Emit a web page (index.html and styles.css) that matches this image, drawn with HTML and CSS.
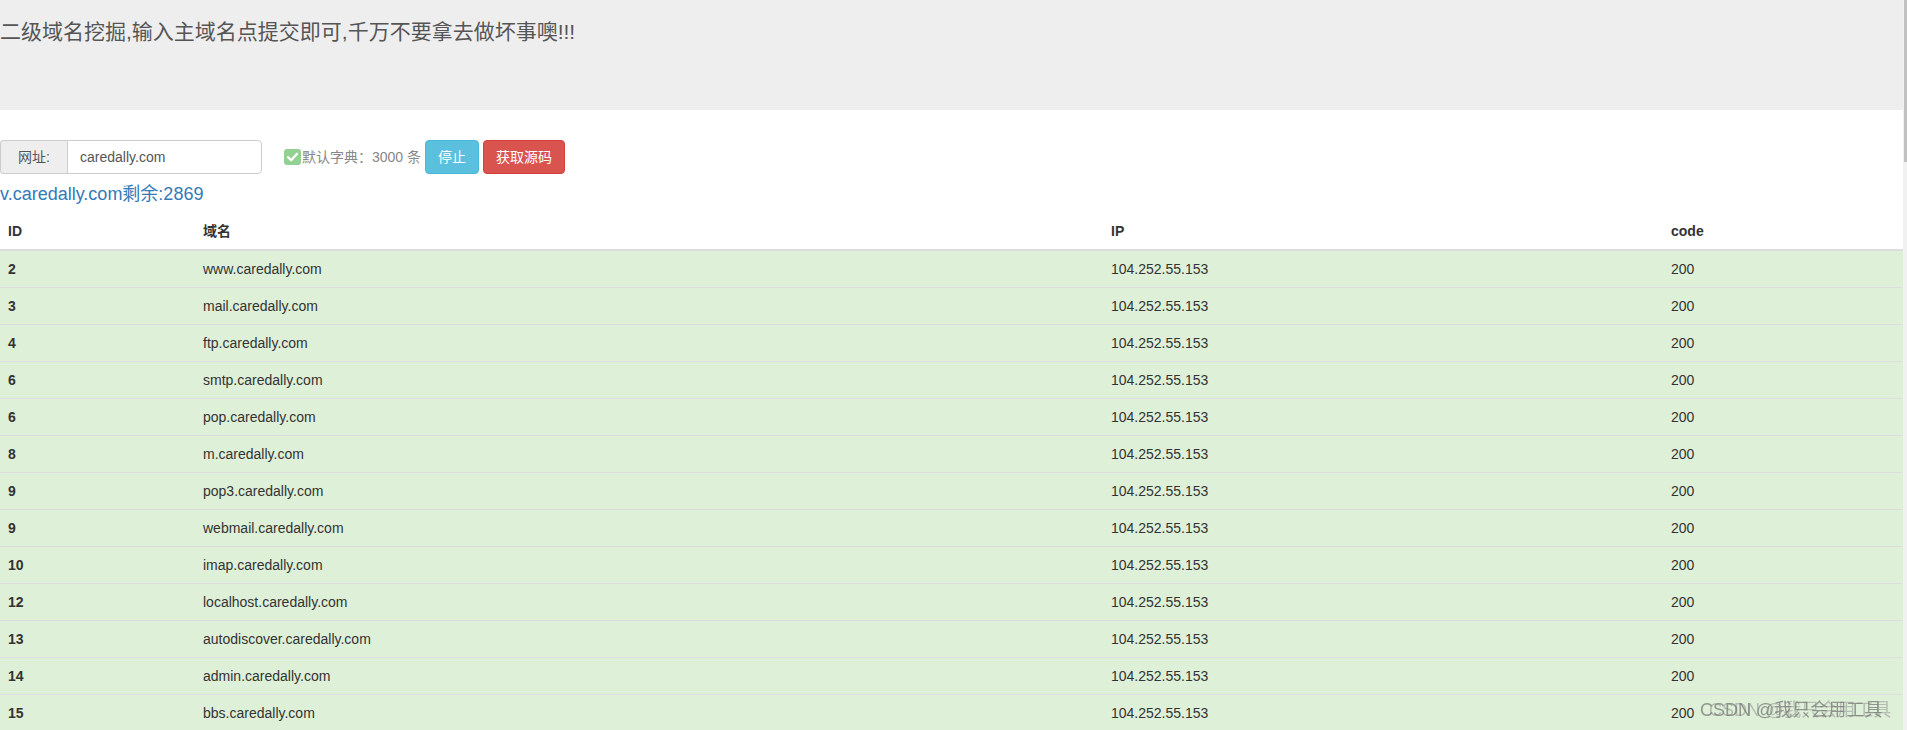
FILE: index.html
```html
<!DOCTYPE html>
<html lang="zh-CN">
<head>
    <meta charset="UTF-8">
    <meta name="viewport" content="width=device-width, initial-scale=1.0">
    <title>二级域名挖掘</title>
    <link rel="stylesheet" href="styles.css">
</head>
<body>
    <div class="page">
        <div class="jumbotron">
            <h3>二级域名挖掘,输入主域名点提交即可,千万不要拿去做坏事噢!!!</h3>
        </div>

        <div class="form-row">
            <div class="input-group">
                <span class="addon">网址:</span>
                <input type="text" class="domain-input" value="caredally.com">
            </div>
            <label class="dict">
                <svg class="check" width="17" height="16" viewBox="0 0 17 16">
                    <rect x="0" y="0" width="17" height="16" rx="3" fill="#92d192"/>
                    <path d="M4 8.2 L7.2 11.2 L13 4.8" fill="none" stroke="#fff" stroke-width="2.4" stroke-linecap="round" stroke-linejoin="round"/>
                </svg>
                默认字典：3000 条
            </label>
            <button class="btn btn-info">停止</button>
            <button class="btn btn-danger">获取源码</button>
        </div>

        <div class="progress-text">v.caredally.com剩余:2869</div>

        <table class="table">
            <thead>
                <tr>
                    <th class="col-id">ID</th>
                    <th class="col-name">域名</th>
                    <th class="col-ip">IP</th>
                    <th class="col-code">code</th>
                </tr>
            </thead>
            <tbody id="rows"></tbody>
        </table>
    </div>

    <div class="watermark">CSDN @我只会用工具</div>

    <div class="scrollbar"><div class="thumb"></div></div>

    <script>
        const results = [
            [2, 'www.caredally.com'],
            [3, 'mail.caredally.com'],
            [4, 'ftp.caredally.com'],
            [6, 'smtp.caredally.com'],
            [6, 'pop.caredally.com'],
            [8, 'm.caredally.com'],
            [9, 'pop3.caredally.com'],
            [9, 'webmail.caredally.com'],
            [10, 'imap.caredally.com'],
            [12, 'localhost.caredally.com'],
            [13, 'autodiscover.caredally.com'],
            [14, 'admin.caredally.com'],
            [15, 'bbs.caredally.com']
        ];

        const tbody = document.getElementById('rows');
        results.forEach(function(r) {
            const tr = document.createElement('tr');
            tr.className = 'success';
            tr.innerHTML = `<th>${r[0]}</th><td>${r[1]}</td><td>104.252.55.153</td><td>200</td>`;
            tbody.appendChild(tr);
        });
    </script>
</body>
</html>
```

FILE: styles.css
```css
html, body {
    margin: 0;
    padding: 0;
    overflow: hidden;
}
body {
    font-family: "Liberation Sans", Arial, "Noto Sans CJK SC", sans-serif;
    font-size: 14px;
    line-height: 20px;
    color: #333;
    background-color: #fff;
}
.page {
    width: 1903px;
}
.jumbotron {
    background-color: #eee;
    height: 110px;
    padding-top: 20px;
    box-sizing: border-box;
}
.jumbotron h3 {
    margin: 0;
    font-size: 21px;
    font-weight: normal;
    line-height: 24px;
    color: #555;
}
.form-row {
    display: flex;
    align-items: center;
    margin-top: 30px;
    height: 34px;
}
.input-group {
    display: flex;
    width: 262px;
    height: 34px;
}
.addon {
    width: 67px;
    box-sizing: border-box;
    padding: 6px 12px;
    background-color: #eee;
    border: 1px solid #ccc;
    border-right: none;
    border-radius: 4px 0 0 4px;
    color: #555;
    text-align: center;
}
.domain-input {
    width: 195px;
    box-sizing: border-box;
    padding: 6px 12px;
    border: 1px solid #ccc;
    border-radius: 0 4px 4px 0;
    font-family: inherit;
    font-size: 14px;
    color: #555;
    outline: none;
}
.dict {
    display: flex;
    align-items: center;
    margin-left: 22px;
    color: #888;
}
.check {
    margin-right: 1px;
}
.btn {
    height: 34px;
    padding: 6px 12px;
    margin-left: 4px;
    border: 1px solid transparent;
    border-radius: 4px;
    font-family: inherit;
    font-size: 14px;
    line-height: 20px;
    color: #fff;
    cursor: pointer;
}
.btn-info {
    background-color: #5bc0de;
    border-color: #46b8da;
}
.btn-danger {
    background-color: #d9534f;
    border-color: #d43f3a;
}
.progress-text {
    margin: 9px 0 8px;
    font-size: 18px;
    line-height: 22px;
    color: #337ab7;
}
.table {
    width: 1903px;
    border-collapse: collapse;
    border-spacing: 0;
    table-layout: fixed;
}
.table th,
.table td {
    padding: 8px;
    text-align: left;
    line-height: 20px;
    font-size: 14px;
}
.table thead th {
    border-bottom: 2px solid #ddd;
    font-weight: bold;
}
.table tbody th {
    font-weight: bold;
}
.table tbody tr {
    border-top: 1px solid #ddd;
}
.table tbody tr:first-child {
    border-top: none;
}
.table tr.success th,
.table tr.success td {
    background-color: #dff0d8;
}
.col-id { width: 179px; }
.col-name { width: 892px; }
.col-ip { width: 544px; }
.col-code { width: 224px; }
.watermark {
    position: fixed;
    left: 1700px;
    top: 699px;
    font-size: 18px;
    line-height: 22px;
    white-space: nowrap;
    color: rgba(120, 120, 120, 0.75);
    text-shadow: 9px 0 0 rgba(140, 140, 140, 0.5);
}
.scrollbar {
    position: fixed;
    top: 0;
    right: 0;
    width: 4px;
    height: 100%;
    background-color: #f1f1f1;
}
.thumb {
    margin-left: 1px;
    width: 3px;
    height: 162px;
    background-color: #c1c1c1;
}
```
